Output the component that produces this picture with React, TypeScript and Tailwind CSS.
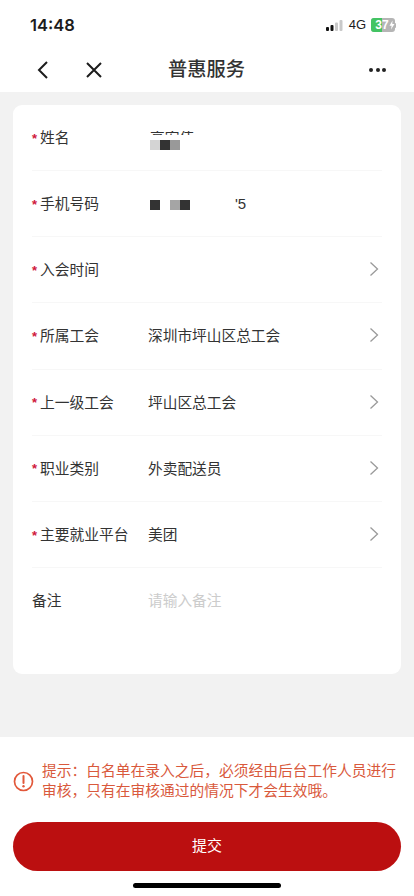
const font = { fontFamily: '"Liberation Sans", "Noto Sans CJK SC", sans-serif' };

const Chevron = () => (
  <svg width="10" height="16" viewBox="0 0 10 16" fill="none" stroke="#9a9a9a" strokeWidth="1.3" className="mb-[2px] ml-auto mr-[3px]">
    <path d="M1.5 1.5 L8.5 8 L1.5 14.5" />
  </svg>
);

const rows = [
  { label: "入会时间", value: "" },
  { label: "所属工会", value: "深圳市坪山区总工会" },
  { label: "上一级工会", value: "坪山区总工会" },
  { label: "职业类别", value: "外卖配送员" },
  { label: "主要就业平台", value: "美团" },
];

const Label = ({ text, required = true }: { text: string; required?: boolean }) => (
  <div className="flex w-[116px] shrink-0 items-center text-[14.75px] text-[#333333]">
    {required ? <span className="w-[8px] text-[13px] font-bold leading-none text-[#d0183c]">*</span> : null}
    <span>{text}</span>
  </div>
);

export default function App() {
  return (
    <div className="flex h-[896px] w-[414px] flex-col overflow-hidden bg-[#f2f2f2]" style={font}>
      {/* status bar + nav */}
      <div className="bg-white">
        <div className="flex h-[50px] items-center pl-[30px] pr-[18px]">
          <span className="text-[16.5px] font-semibold text-[#1c1c1c]" style={{ fontFamily: "Inter, sans-serif" }}>14:48</span>
          <div className="ml-auto flex items-center">
            <svg width="20" height="13" viewBox="0 0 20 13" className="mr-[4px]">
              <rect x="1" y="8" width="3" height="4" rx="1" fill="#111" />
              <rect x="5.5" y="6" width="3" height="6" rx="1" fill="#111" />
              <rect x="10" y="3.5" width="3" height="8.5" rx="1" fill="#c9c9c9" />
              <rect x="14.5" y="1" width="3" height="11" rx="1" fill="#c9c9c9" />
            </svg>
            <span className="mr-[5px] text-[13px] text-[#1c1c1c]">4G</span>
            <div className="flex h-[14px] w-[24px] overflow-hidden rounded-[3px] bg-[#b5b5b5] text-[12px] font-bold leading-[14px] text-white">
              <div className="w-[11px] bg-[#43c463] text-right">3</div>
              <div className="w-[7px]">7</div>
              <svg width="6" height="14" viewBox="0 0 6 14" fill="#ffffff">
                <path d="M3.5 2.5 L0.5 7.8 H2.6 L2 11.5 L5.5 6 H3.3 Z" />
              </svg>
            </div>
            <div className="h-[5px] w-[1px] rounded-r bg-[#b5b5b5]" />
          </div>
        </div>
        <div className="relative flex h-[42px] items-center pb-[2px]">
          <svg width="14" height="20" viewBox="0 0 14 20" fill="none" stroke="#1c1c1c" strokeWidth="2" className="ml-[35px]">
            <path d="M12 2 L4 10 L12 18" />
          </svg>
          <svg width="18" height="18" viewBox="0 0 18 18" fill="none" stroke="#1c1c1c" strokeWidth="2" className="ml-[36px]">
            <path d="M2 2 L16 16 M16 2 L2 16" />
          </svg>
          <span className="ml-[65px] text-[19.25px] font-medium text-[#333333]">普惠服务</span>
          <div className="ml-auto mr-[28px] flex gap-[2.5px]">
            <div className="h-[4px] w-[4px] rounded-full bg-[#222222]" />
            <div className="h-[4px] w-[4px] rounded-full bg-[#222222]" />
            <div className="h-[4px] w-[4px] rounded-full bg-[#222222]" />
          </div>
        </div>
      </div>

      {/* form card */}
      <div className="mx-[13px] mt-[13px] h-[569px] rounded-[9px] bg-white px-[19px]">
        <div className="flex h-[66px] items-center border-b border-[#f7f7f7] pt-[2px]">
          <Label text="姓名" />
          <div className="ml-[2px] flex flex-col pt-[3px]">
            <div className="h-[4px] overflow-hidden text-[14.75px] leading-[20px] text-[#333333]">
              <div className="mt-[-3px]">高宏伟</div>
            </div>
            <div className="mt-[5px] flex">
              <div className="h-[10px] w-[10px] bg-[#d4d4d4]" />
              <div className="h-[10px] w-[10px] bg-[#333333]" />
              <div className="h-[10px] w-[10px] bg-[#999999]" />
            </div>
          </div>
        </div>
        <div className="flex h-[66px] items-center border-b border-[#f7f7f7] pt-[2px]">
          <Label text="手机号码" />
          <div className="ml-[2px] flex w-[100px] items-center">
            <div className="h-[10px] w-[10px] bg-[#333333]" />
            <div className="ml-[10px] h-[10px] w-[10px] bg-[#a5a5a5]" />
            <div className="h-[10px] w-[10px] bg-[#333333]" />
            <span className="ml-[45px] text-[15px] text-[#333333]">'5</span>
          </div>
        </div>
        {rows.map((row) => (
          <div key={row.label} className="flex h-[66.25px] items-center border-b border-[#f7f7f7] pt-[1px]">
            <Label text={row.label} />
            <span className="text-[14.7px] text-[#333333]">{row.value}</span>
            <Chevron />
          </div>
        ))}
        <div className="flex h-[66px] items-center">
          <Label text="备注" required={false} />
          <span className="text-[14.7px] text-[#cccccc]">请输入备注</span>
        </div>
      </div>

      {/* bottom */}
      <div className="mt-auto flex h-[159px] flex-col bg-white px-[13px]">
        <div className="mt-[24px] flex items-center">
          <svg width="21" height="21" viewBox="0 0 21 21" fill="none" className="shrink-0">
            <circle cx="10.5" cy="10.5" r="9" stroke="#e2583a" strokeWidth="1.7" />
            <path d="M10.5 5 V12" stroke="#e2583a" strokeWidth="2" strokeLinecap="round" />
            <circle cx="10.5" cy="15.3" r="1.2" fill="#e2583a" />
          </svg>
          <p className="ml-[8px] text-[14.75px] leading-[20px] text-[#d9593c]">
            提示：白名单在录入之后，必须经由后台工作人员进行审核，只有在审核通过的情况下才会生效哦。
          </p>
        </div>
        <div className="mt-[21px] flex h-[49px] items-center justify-center rounded-full bg-[#bb0f10] text-[15px] text-white">
          提交
        </div>
        <div className="mx-auto mt-[12px] h-[5px] w-[148px] rounded-full bg-black" />
      </div>
    </div>
  );
}
